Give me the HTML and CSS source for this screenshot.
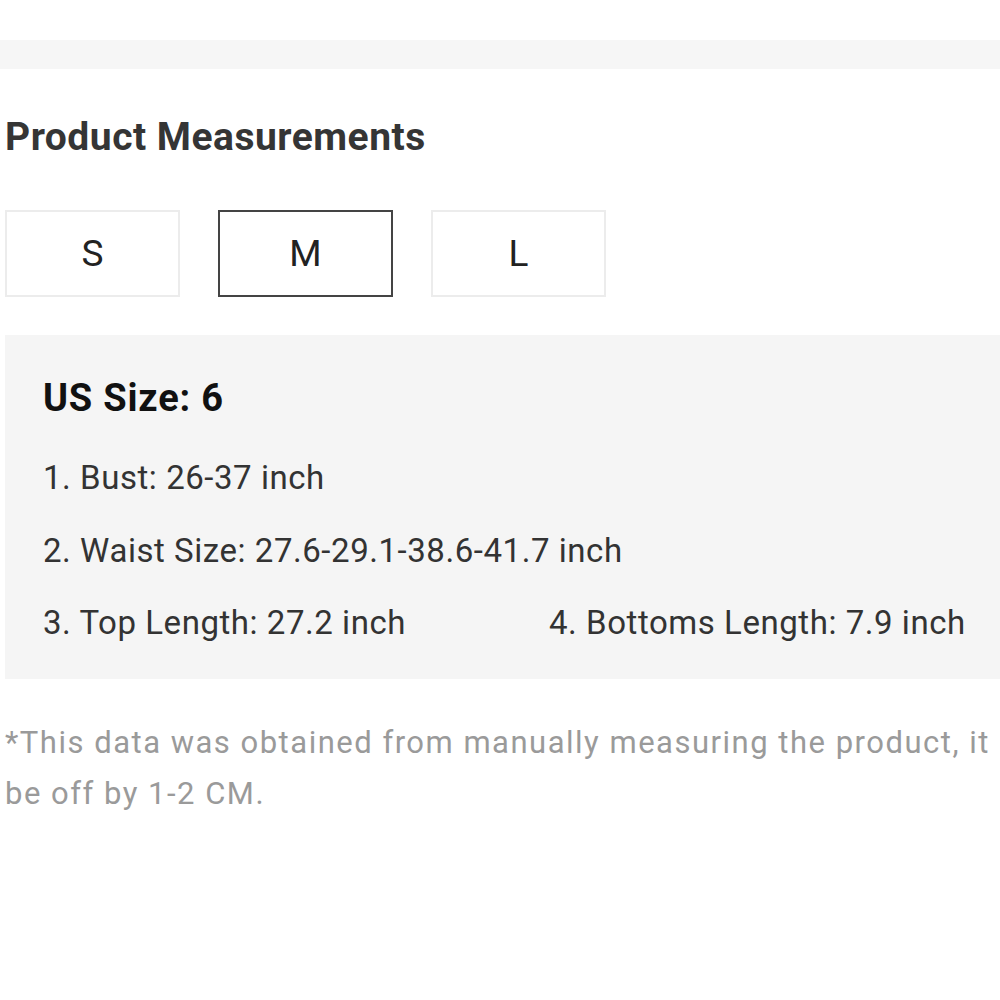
FILE: index.html
```html
<!DOCTYPE html>
<html lang="en">
<head>
<meta charset="utf-8">
<title>Product Measurements</title>
<link rel="stylesheet" href="styles.css">
</head>
<body>
<div class="page">
  <div class="top-space"></div>
  <div class="divider"></div>
  <section class="measure">
    <h2 class="title">Product Measurements</h2>
    <div class="sizes">
      <div class="size">S</div>
      <div class="size active">M</div>
      <div class="size">L</div>
    </div>
    <div class="detail">
      <div class="us-size">US Size: 6</div>
      <ul class="list">
        <li class="item full">1. Bust: 26-37 inch</li>
        <li class="item full">2. Waist Size: 27.6-29.1-38.6-41.7 inch</li>
        <li class="item">3. Top Length: 27.2 inch</li>
        <li class="item">4. Bottoms Length: 7.9 inch</li>
      </ul>
    </div>
    <p class="note">*This data was obtained from manually measuring the product, it may be off by 1-2 CM.</p>
  </section>
</div>
</body>
</html>
```
FILE: styles.css
```css
html, body {
  margin: 0;
  padding: 0;
  background: #fff;
  overflow: hidden;
}
body {
  font-family: Roboto, "Liberation Sans", Arial, sans-serif;
  color: #333;
}
.page {
  width: 1100px;
}
.top-space {
  height: 40px;
}
.divider {
  height: 29px;
  background: #f6f6f6;
}
.measure {
  padding-left: 5px;
}
.title {
  margin: 47px 0 0;
  font-size: 39px;
  line-height: 42px;
  letter-spacing: 0.5px;
  font-weight: 700;
  color: #353535;
}
.sizes {
  display: flex;
  gap: 38px;
  margin-top: 52px;
}
.size {
  box-sizing: border-box;
  width: 175px;
  height: 87px;
  border: 2px solid #ececec;
  display: flex;
  align-items: center;
  justify-content: center;
  font-size: 37px;
  color: #222;
}
.size.active {
  border-color: #444;
}
.detail {
  box-sizing: border-box;
  width: 1088px;
  margin-top: 38px;
  background: #f5f5f5;
  padding: 41px 38px 36px;
}
.us-size {
  font-size: 38px;
  line-height: 45px;
  letter-spacing: 0.8px;
  font-weight: 700;
  color: #111;
}
.list {
  list-style: none;
  margin: 37px 0 0;
  padding: 0;
  display: grid;
  grid-template-columns: 506px 506px;
  row-gap: 32.5px;
}
.item {
  font-size: 33px;
  line-height: 40px;
  letter-spacing: 0.55px;
  color: #333;
  white-space: nowrap;
}
.item.full {
  grid-column: 1 / -1;
}
.note {
  width: 1065px;
  margin: 38px 0 0;
  font-size: 31px;
  line-height: 51px;
  letter-spacing: 1.5px;
  color: #9a9a9a;
}
```
